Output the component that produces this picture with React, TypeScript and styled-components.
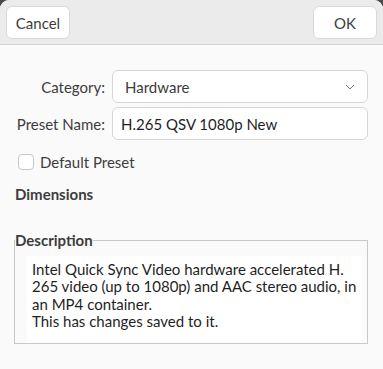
import styled, { createGlobalStyle } from "styled-components"

const Global = createGlobalStyle`
    html, body {
        margin: 0;
        background: #4a4a4a;
    }
    body {
        font-family: Lato, "Noto Sans", sans-serif;
        font-size: 15px;
        color: #3d3d3d;
    }
`

const Window = styled.div`
    width: 383px;
    height: 369px;
    background: #fafafa;
    border-radius: 9px 9px 0 0;
    overflow: hidden;
    display: flex;
    flex-direction: column;
`

const HeaderBar = styled.div`
    height: 45px;
    box-sizing: border-box;
    padding: 6px 6px 0 6px;
    background: #ebebeb;
    border-bottom: 1px solid #d6d6d6;
    display: flex;
    justify-content: space-between;
    align-items: flex-start;
`

const Button = styled.button`
    height: 33px;
    width: 64px;
    background: #ffffff;
    border: 1px solid #d9d9d9;
    border-radius: 6px;
    font-family: inherit;
    font-size: 15px;
    color: #3d3d3d;
    padding: 0;
`

const Body = styled.div`
    padding: 25px 15px 0 15px;
    display: flex;
    flex-direction: column;
`

const Form = styled.div`
    display: grid;
    grid-template-columns: 90px 1fr;
    column-gap: 7px;
    row-gap: 4px;
    align-items: center;
`

const Label = styled.span`
    text-align: right;
    white-space: nowrap;
`

const Field = styled.div<{ $pad?: number; $dark?: boolean }>`
    height: 33px;
    box-sizing: border-box;
    background: #ffffff;
    border: 1px solid #d6d6d6;
    border-radius: 6px;
    padding: 0 12px 0 ${(p) => p.$pad ?? 12}px;
    display: flex;
    align-items: center;
    justify-content: space-between;
    color: ${(p) => (p.$dark ? "#1f1f1f" : "#3d3d3d")};
`

const CheckRow = styled.label`
    display: flex;
    align-items: center;
    gap: 6px;
    margin: 13px 0 0 3px;
    height: 17px;
`

const Check = styled.span`
    width: 16px;
    height: 16px;
    box-sizing: border-box;
    border: 1px solid #c8c8c8;
    border-radius: 4px;
    background: #ffffff;
`

const Heading = styled.div`
    font-weight: 700;
    margin-top: 14px;
    line-height: 20px;
`

const Frame = styled.fieldset`
    margin: 26px 0 0 -1px;
    padding: 0;
    border: 1px solid #c9c9c9;
    min-width: 0;
`

const Legend = styled.legend`
    padding: 0;
    font-weight: 700;
    line-height: 20px;
`

const TextView = styled.div`
    margin: 6px 5px 0 12px;
    height: 87px;
    box-sizing: border-box;
    background: #ffffff;
    padding: 5px 5px 0 5px;
    line-height: 17.3px;
    color: #1f1f1f;
`

export default function App() {
    return (
        <Window>
            <Global />
            <HeaderBar>
                <Button>Cancel</Button>
                <Button>OK</Button>
            </HeaderBar>
            <Body>
                <Form>
                    <Label>Category:</Label>
                    <Field>
                        <span>Hardware</span>
                        <svg width="10" height="6" viewBox="0 0 10 6">
                            <path d="M1 1 L5 5 L9 1" fill="none" stroke="#777" strokeWidth="1" />
                        </svg>
                    </Field>
                    <Label>Preset Name:</Label>
                    <Field $pad={8} $dark>H.265 QSV 1080p New</Field>
                </Form>
                <CheckRow>
                    <Check />
                    Default Preset
                </CheckRow>
                <Heading>Dimensions</Heading>
                <Frame>
                    <Legend>Description</Legend>
                    <TextView>
                        Intel Quick Sync Video hardware accelerated H.
                        265 video (up to 1080p) and AAC stereo audio, in
                        an MP4 container.
                        <br />
                        This has changes saved to it.
                    </TextView>
                </Frame>
            </Body>
        </Window>
    )
}
